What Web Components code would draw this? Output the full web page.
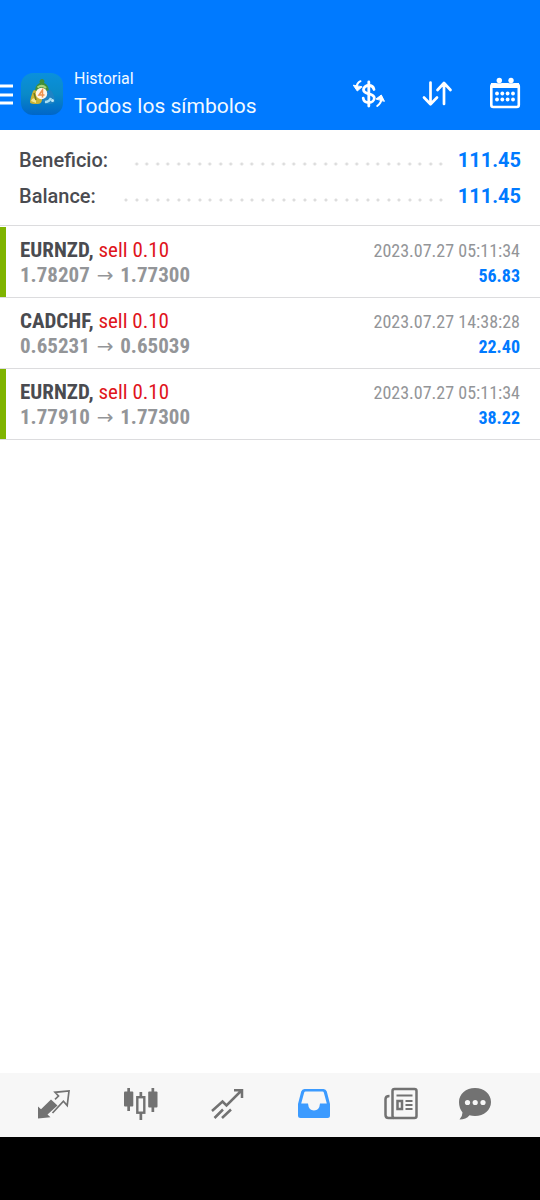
<!DOCTYPE html>
<html lang="es">
<head>
<meta charset="utf-8">
<meta name="viewport" content="width=device-width, initial-scale=1">
<title>Historial</title>
<style>
  html, body { margin: 0; height: 100%; }
  body { font-family: Roboto, "Liberation Sans", sans-serif; background: #fff; color: #4a4b50; }
</style>
</head>
<body>
<history-app></history-app>
<script>
const define = (name, html, setup) => {
  customElements.define(name, class extends HTMLElement {
    connectedCallback() {
      if (this.shadowRoot) return;
      const root = this.attachShadow({ mode: 'open' });
      const t = document.createElement('template');
      t.innerHTML = html;
      root.append(t.content.cloneNode(true));
      if (setup) setup(this, root);
    }
  });
};

const ICONS = {
  menu: '<svg width="14" height="40" viewBox="0 0 14 40"><path d="M0 12h13M0 21h13M0 29h13" stroke="#fff" stroke-width="2.8"/></svg>',
  logo: `<svg width="42" height="42" viewBox="0 0 42 42">
    <defs><linearGradient id="g" x2="0" y2="1"><stop stop-color="#0a90dc"/><stop offset=".5" stop-color="#0a8ac8"/><stop offset="1" stop-color="#0066c8"/></linearGradient></defs>
    <rect width="42" height="42" rx="12" fill="url(#g)"/>
    <path d="M14 19c0-5 2-8 5-9a2.500 2.500 0 1 1 4 0c3 1 5 4 5 9l-3 4h-8z" fill="#3f8f3a"/>
    <path d="M16.500 14.500q4.500-3.500 8.500.5" stroke="#a9d47c" stroke-width="2" fill="none"/>
    <path d="M13 17c4 1 8 5 8 9s-2 5-5 5-7 0-7-2 3-12 4-12z" fill="#c9b334"/>
    <path d="M10 28q2-5 5-1v3z" fill="#f4e690"/><path d="M13 20l2 7" stroke="#6f7a22" stroke-width="1.500"/>
    <path d="M29 17c3 1 5 9 5 11s-3 3-6 3-7-1-7-5 4-9 8-9z" fill="#1f83c4"/>
    <path d="M24 29q4 0 6-4" stroke="#a5def5" stroke-width="2.500" fill="none"/><circle cx="31.500" cy="27.500" r="1.500" fill="#bfeafa"/>
    <circle cx="20.500" cy="20.500" r="5.700" fill="#fff5e8"/>
    <path d="M21.500 24.500v-7.500l-3.500 5h5.500" fill="none" stroke="#f0914c" stroke-width="1.500"/></svg>`,
  currency: `<svg width="34" height="34" viewBox="0 0 34 34" fill="none" stroke="#fff" stroke-width="2.800" stroke-linecap="round">
    <path d="M16.800 5v24"/><path d="M22 12.500c-.6-2.800-2.500-4-5.200-4s-5.300 1.500-5.300 4.200c0 5.500 10.800 2.800 10.800 8.200 0 2.800-2.500 4.600-5.500 4.600s-5.200-1.600-5.600-4.400"/>
    <path d="M4.500 11c0-3 1.500-5.500 4-6.800M29.500 21c0 3-1.500 6-4.300 8" stroke-width="2"/><path d="M1.500 8.500l3.800 5.500 4.500-4zM32.300 24l-3-6-5 3.800z" fill="#fff" stroke="#fff" stroke-width="1"/></svg>`,
  sort: '<svg width="34" height="34" viewBox="0 0 34 34" fill="none" stroke="#fff" stroke-width="2.700" stroke-linecap="round" stroke-linejoin="round"><path d="M10.500 5.500V27M4 20.500l6.500 6.700 6.500-6.700M24 27V6.500M17.500 13l6.500-7 6.500 7"/></svg>',
  calendar: `<svg width="34" height="34" viewBox="0 0 34 34"><rect x="3.300" y="7.500" width="27.500" height="22.500" rx="2" fill="none" stroke="#fff" stroke-width="2.600"/><path d="M3 6h5q3 3 6 0h6q3 3 6 0h5v5H3z" fill="#fff"/><circle cx="11.300" cy="3.500" r="2.700" fill="#fff"/><circle cx="23" cy="3.500" r="2.700" fill="#fff"/>
    <g fill="#fff"><circle cx="9" cy="16.500" r="1.900"/><circle cx="14.300" cy="16.500" r="1.900"/><circle cx="19.600" cy="16.500" r="1.900"/><circle cx="25" cy="16.500" r="1.900"/><circle cx="9" cy="22.500" r="1.900"/><circle cx="14.300" cy="22.500" r="1.900"/><circle cx="19.600" cy="22.500" r="1.900"/><circle cx="25" cy="22.500" r="1.900"/></g></svg>`,
  quotes: '<svg width="34" height="34" viewBox="0 0 34 34"><path d="M1 31.500V19.500l3 2.800L14 12.500l6.500 6L10.500 27.500l3 2.800z" fill="#727272"/><path d="M18 12.300L21.500 9l-3.500-3.700 14-1.300-1.800 14.500-3.800-4.300L15.500 26" fill="none" stroke="#727272" stroke-width="1.700"/></svg>',
  chart: '<svg width="34" height="34" viewBox="0 0 34 34" fill="#727272"><rect x="0" y="4.500" width="9.300" height="15" rx="1"/><path d="M3.300 1h2.700v23H3.300zM27.500 1h2.700v24h-2.700z"/><rect x="24.200" y="4.500" width="9.300" height="16" rx="1"/><path d="M15.500 5h2.700v5h-2.700zM15.500 26h2.700v7h-2.700z"/><rect x="13.300" y="10.200" width="7" height="15.500" fill="none" stroke="#727272" stroke-width="2.400"/></svg>',
  trade: '<svg width="34" height="34" viewBox="0 0 34 34" fill="none" stroke="#727272" stroke-width="2.500"><path d="M1 24l10.500-9.500 4 4L30 4M23 3.300h8V11M3.500 31l8.500-8.500M11 31l9-8.500"/></svg>',
  inbox: '<svg width="34" height="34" viewBox="0 0 34 34"><path fill-rule="evenodd" fill="#3c9bff" d="M7.500 2h19q2.500 0 3.300 2.500L33 17v11.500q0 2.500-2.500 2.500h-27Q1 31 1 28.500V17L4.200 4.500Q5 2 7.500 2zM8.500 4.500q-1 0-1.300 1L4.200 16.500H11q.6 7 6 7t6-7h6.800L26.800 5.500q-.3-1-1.300-1z"/></svg>',
  news: '<svg width="34" height="34" viewBox="0 0 34 34" fill="none" stroke="#727272" stroke-width="2.500"><rect x="8.500" y="2" width="24" height="29" rx="2"/><path d="M5.500 9q-4 0-4 3v16q0 3 3 3H10"/><path d="M12.500 8.500h16M21.500 14h7M21.500 18h7M21.500 22h7" stroke-width="2"/><rect x="13.500" y="14" width="4.500" height="8"/></svg>',
  chat: '<svg width="34" height="34" viewBox="0 0 34 34"><path d="M17 1c9 0 16 6 16 14S26 29 17 29q-3 0-5.500-.8Q8 32.500 1.500 32.500q3-3 3-7Q1 21 1 15C1 7 8 1 17 1z" fill="#727272"/><g fill="#f7f7f7"><circle cx="9.500" cy="15.500" r="2.600"/><circle cx="17.200" cy="15.500" r="2.600"/><circle cx="25" cy="15.500" r="2.600"/></g></svg>'
};

define('ui-icon', '<style>:host{display:block;flex:none}svg{display:block}</style>',
  (el, root) => root.append(document.createRange().createContextualFragment(ICONS[el.getAttribute('name')])));

define('icon-button', `<style>
  :host{display:flex}
  button{all:unset;flex:1;display:flex;align-items:center;justify-content:center;cursor:pointer}
  button:focus-visible{outline:2px solid #99caff;outline-offset:-4px}
</style><button type="button"><slot></slot></button>`,
  (el, root) => {
    root.querySelector('button').setAttribute('aria-label', el.getAttribute('label'));
    if (el.hasAttribute('current')) root.querySelector('button').setAttribute('aria-current', 'page');
  });

define('app-header', `<style>
  :host{display:block;background:#007aff;color:#f2f9ff;padding:58px 1px 0 0}
  header{display:flex;align-items:center;height:72px}
  .logo{margin:0 11px 0 7px}
  .titles{flex:1;min-width:0}
  p,h1{margin:0;font-weight:400;white-space:nowrap}
  p{font-size:16px;line-height:24px}
  h1{font-size:21px;line-height:30px}
  .action{width:68px;height:68px;flex:none}
</style>
<header>
  <icon-button label="Menú"><ui-icon name="menu"></ui-icon></icon-button>
  <ui-icon class="logo" name="logo"></ui-icon>
  <div class="titles"><p><slot name="section"></slot></p><h1><slot></slot></h1></div>
  <icon-button class="action" label="Divisa"><ui-icon name="currency"></ui-icon></icon-button>
  <icon-button class="action" label="Ordenar"><ui-icon name="sort"></ui-icon></icon-button>
  <icon-button class="action" label="Periodo"><ui-icon name="calendar"></ui-icon></icon-button>
</header>`);

define('summary-line', `<style>
  :host{display:flex;align-items:center;height:36px;font-size:20px;font-weight:500;line-height:24px}
  .dots{flex:1;height:4px;margin:8px 11px 0 26px;
    background:radial-gradient(circle at 5px 2px,#dcdcdc 1px,transparent 2px) right/21px 4px repeat-x,
      radial-gradient(circle at 15px 2px,#dcdcdc 1px,transparent 2px) right/21px 4px repeat-x}
  .value{color:#007aff;font-weight:700}
</style><span><slot></slot></span><span class="dots"></span><span class="value"><slot name="value"></slot></span>`);

define('deal-row', `<style>
  :host{display:flex;justify-content:space-between;box-sizing:border-box;height:71px;padding:11px 20px 0;
    border-bottom:1px solid #dcdcde;
    font-family:"Roboto Condensed","Liberation Sans Narrow",Roboto,sans-serif}
  :host([marked]){background:linear-gradient(#7fb400,#7fb400) left/6px 100% no-repeat padding-box}
  .left div,.right div{line-height:25px;white-space:nowrap}
  .left{font-size:21px}
  .symbol{font-weight:700}
  .side{color:#e0141c}
  .prices{color:#939598;font-weight:700}
  .arrow{font:20px/20px "DejaVu Sans",sans-serif;margin:0 2px}
  .right{text-align:right;font-size:18px}
  .time{color:#939598}
  .profit{font-weight:700;color:#007aff}
</style>
<div class="left"><div><span class="symbol"><slot name="symbol"></slot>,</span> <span class="side"><slot name="side"></slot></span></div>
<div class="prices"><slot name="open"></slot> <span class="arrow">→</span> <slot name="close"></slot></div></div>
<div class="right"><div class="time"><slot name="time"></slot></div><div class="profit"><slot name="profit"></slot></div></div>`);

define('tab-bar', `<style>
  :host{display:block;background:#f7f7f7;border-bottom:63px solid #000}
  nav{display:flex;height:62px;padding:0 35px 2px 11px}
  icon-button{flex:87 1 0}
  icon-button:last-child{flex-grow:61}
</style>
<nav aria-label="Principal">
  <icon-button label="Cotizaciones"><ui-icon name="quotes"></ui-icon></icon-button>
  <icon-button label="Gráficos"><ui-icon name="chart"></ui-icon></icon-button>
  <icon-button label="Operaciones"><ui-icon name="trade"></ui-icon></icon-button>
  <icon-button label="Historial" current><ui-icon name="inbox"></ui-icon></icon-button>
  <icon-button label="Noticias"><ui-icon name="news"></ui-icon></icon-button>
  <icon-button label="Mensajes"><ui-icon name="chat"></ui-icon></icon-button>
</nav>`);

const deals = [
  ['EURNZD', 'sell 0.10', '1.78207', '1.77300', '2023.07.27 05:11:34', '56.83', true],
  ['CADCHF', 'sell 0.10', '0.65231', '0.65039', '2023.07.27 14:38:28', '22.40', false],
  ['EURNZD', 'sell 0.10', '1.77910', '1.77300', '2023.07.27 05:11:34', '38.22', true]
];
const keys = ['symbol', 'side', 'open', 'close', 'time', 'profit'];

define('history-app', `<style>
  :host{display:flex;flex-direction:column;min-height:100vh}
  main{flex:1}
  .summary{padding:12px 19px 11px;border-bottom:1px solid #dcdcde}
  .deals{padding-top:1px}
</style>
<app-header><span slot="section">Historial</span>Todos los símbolos</app-header>
<main>
  <section class="summary">
    <summary-line>Beneficio:<span slot="value">111.45</span></summary-line>
    <summary-line>Balance:<span slot="value">111.45</span></summary-line>
  </section>
  <section class="deals">${deals.map(d => `<deal-row${d[6] ? ' marked' : ''}>${keys.map((k, i) => `<span slot="${k}">${d[i]}</span>`).join('')}</deal-row>`).join('')}</section>
</main>
<tab-bar></tab-bar>`);
</script>
</body>
</html>
